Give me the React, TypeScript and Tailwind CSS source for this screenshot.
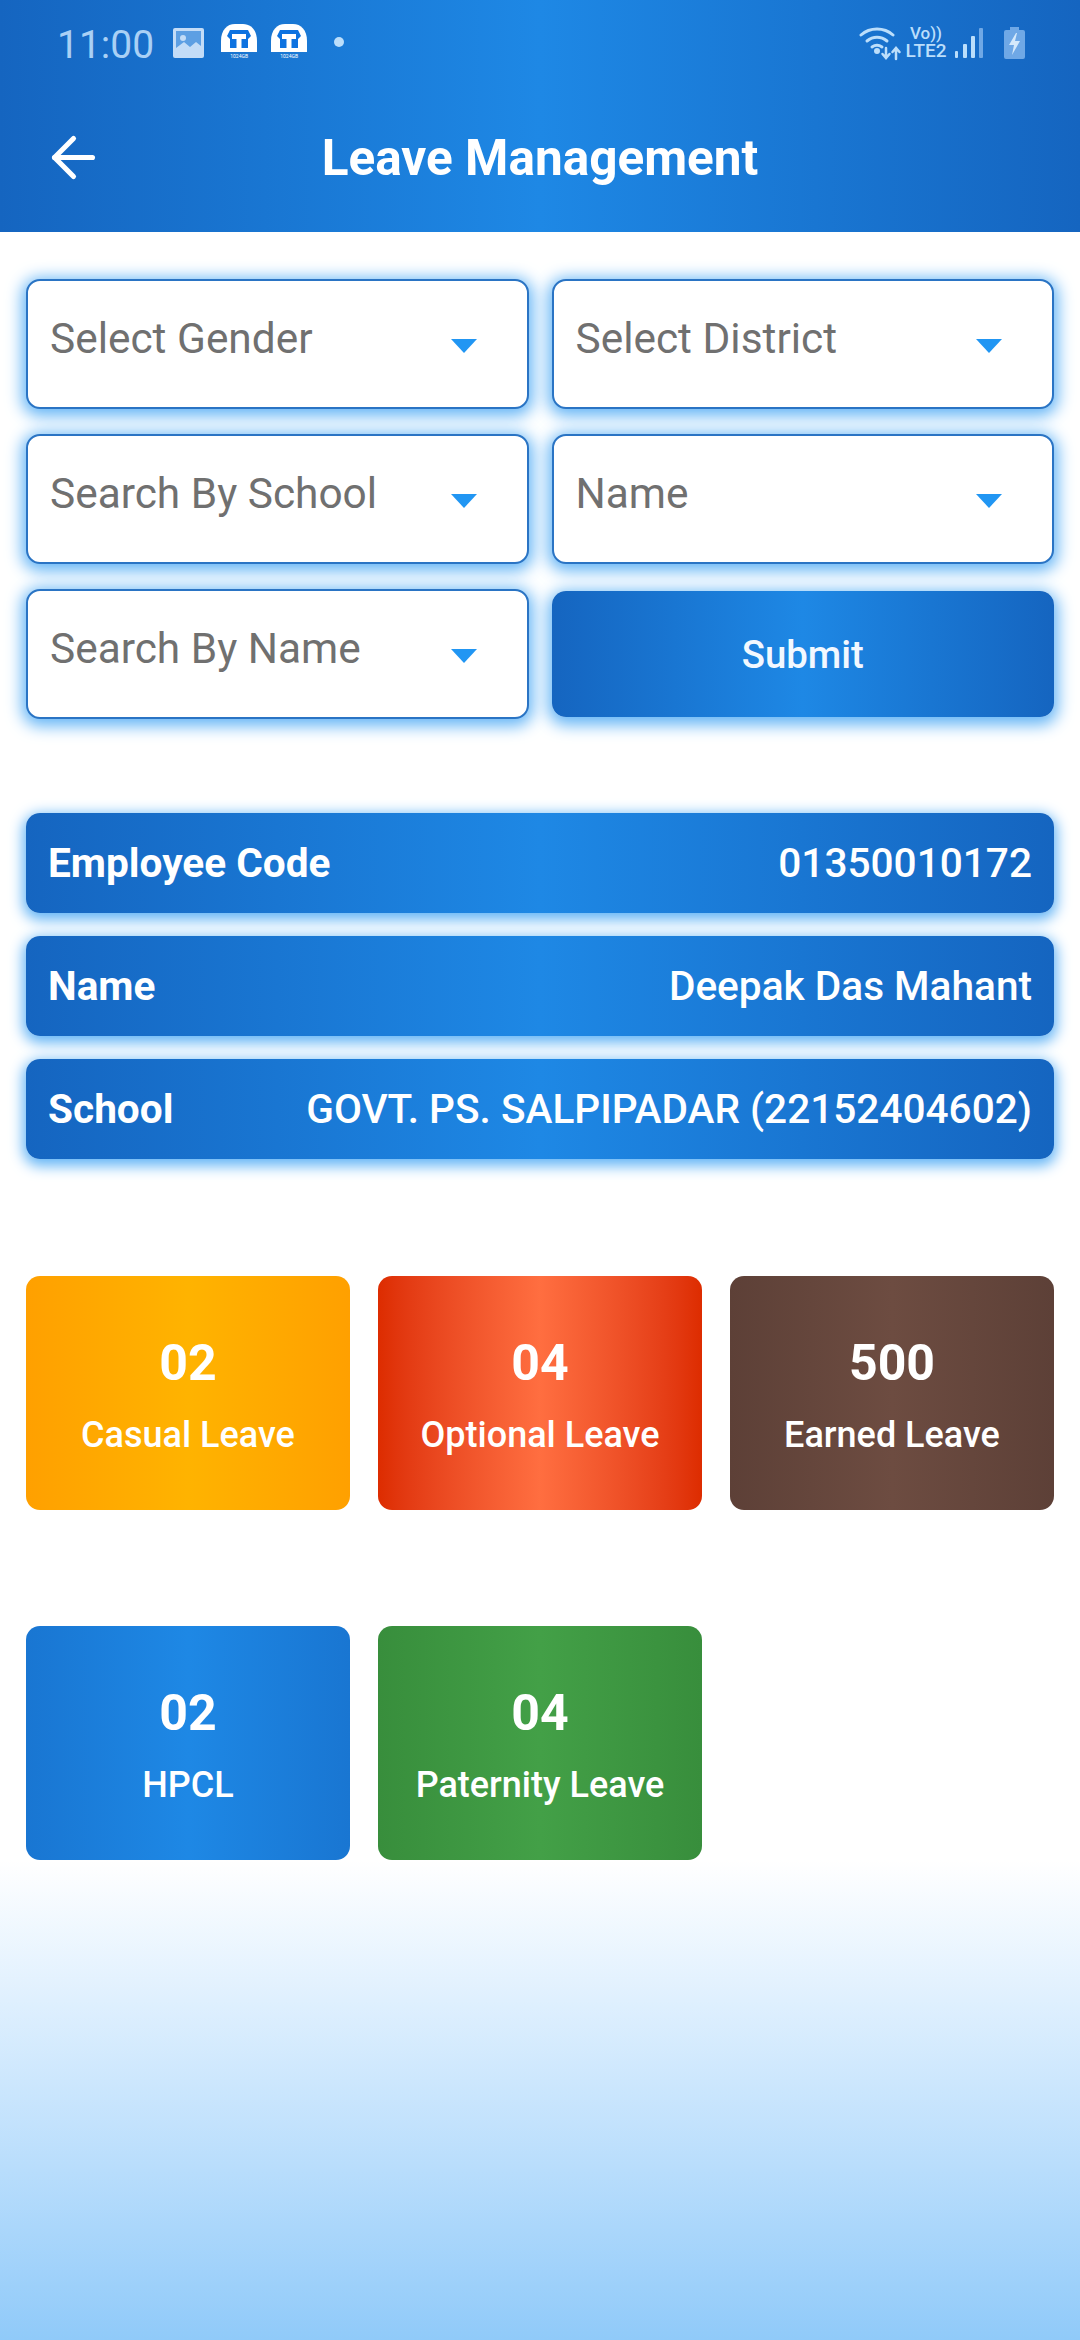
import React from 'react';
import { ArrowLeft } from 'lucide-react';

// ── Status bar icons ─────────────────────────────────────────────────────────
function PhotoIcon() {
  return (
    <svg width="31" height="30" viewBox="0 0 31 30" className="block">
      <rect x="0" y="0" width="31" height="30" rx="2" fill="#c3dcf7" />
      <rect x="3" y="3" width="25" height="24" fill="#5d9fe3" />
      <circle cx="10" cy="10" r="3" fill="#c3dcf7" />
      <path d="M3 27v-7l8-6 6 5 6-5 5 4v9z" fill="#c3dcf7" />
    </svg>
  );
}

function StorageIcon() {
  return (
    <div className="flex flex-col items-center w-[36px]">
      <svg width="36" height="28" viewBox="0 0 36 28" className="block">
        <path d="M0 28V17C0 6 6 0 14 0h8c8 0 14 6 14 17v11z" fill="#ffffff" />
        <path d="M9 6h18l3 6-3 3v9H9v-9l-3-3z" fill="#0d72e0" />
        <path d="M11 10h14v5h-4.500v9h-5v-9H11z" fill="#ffffff" />
      </svg>
      <span className="text-[5px] leading-[8px] text-white">1024GB</span>
    </div>
  );
}

function WifiIcon() {
  return (
    <svg width="42" height="34" viewBox="0 0 42 34" fill="none" stroke="#bbdefb" strokeWidth="3" strokeLinecap="round" className="block">
      <path d="M2 8C11 0 25 0 34 8" />
      <path d="M8 14c6-5 14-5 20 0" />
      <path d="M13 20c3-2 7-2 10 0" />
      <circle cx="18" cy="24" r="1.500" fill="#bbdefb" />
      <path d="M27 21v9M23.500 27l3.500 4 3.500-4" strokeWidth="2.500" />
      <path d="M37 32v-10M33.500 25l3.500-4 3.500 4" strokeWidth="2.500" />
    </svg>
  );
}

function SignalIcon() {
  return (
    <svg width="28" height="30" viewBox="0 0 28 30" className="block">
      <rect x="0" y="23" width="3" height="7" rx="1" fill="#bbdefb" />
      <rect x="8" y="16" width="4" height="14" rx="1" fill="#bbdefb" />
      <rect x="16" y="8" width="4" height="22" rx="1" fill="#bbdefb" />
      <rect x="24" y="0" width="4" height="30" rx="1" fill="#6fa8e6" />
    </svg>
  );
}

function BatteryIcon() {
  return (
    <svg width="21" height="32" viewBox="0 0 21 32" className="block">
      <path d="M6 0h9v3h4a2 2 0 012 2v25a2 2 0 01-2 2H2a2 2 0 01-2-2V5a2 2 0 012-2h4z" fill="#6fa8e6" />
      <path d="M12 6L5 18h5l-2 10 8-14h-5l2-8z" fill="#d5e9fb" />
    </svg>
  );
}

function StatusBar() {
  return (
    <div className="flex items-start h-[84px] pl-[57px] pr-[55px] pt-[23px]">
      <span className="text-[39px] leading-[44px] text-[#a9d0f5]">11:00</span>
      <div className="ml-[19px] mt-[5px]"><PhotoIcon /></div>
      <div className="ml-[17px] mt-[1px] flex gap-[14px]">
        <StorageIcon />
        <StorageIcon />
      </div>
      <div className="ml-[27px] mt-[14px] w-[10px] h-[10px] rounded-full bg-[#bbdefb]" />
      <div className="ml-auto flex items-start">
        <div className="mt-[4px]"><WifiIcon /></div>
        <div className="ml-[4px] mt-[1px] flex flex-col items-center w-[42px] text-[#bbdefb] font-medium">
          <span className="text-[17px] leading-[18px]">Vo))</span>
          <span className="text-[19px] leading-[18px]">LTE2</span>
        </div>
        <div className="ml-[8px] mt-[5px]"><SignalIcon /></div>
        <div className="ml-[21px] mt-[4px]"><BatteryIcon /></div>
      </div>
    </div>
  );
}

// ── Form controls ────────────────────────────────────────────────────────────
function SelectBox({ label }: { label: string }) {
  return (
    <div className="h-[130px] flex items-center justify-between pl-[22px] pr-[50px] pb-[10px] bg-white border-[2.5px] border-[#2a74c4] rounded-[14px] shadow-[0_3px_16px_4px_#64b5f6]">
      <span className="text-[42.4px] leading-[50px] text-[#707070]">{label}</span>
      <svg width="26" height="14" viewBox="0 0 26 14" className="block mt-[13px]">
        <path d="M0 0h26L13 14z" fill="#2196f3" />
      </svg>
    </div>
  );
}

function InfoRow({ label, value }: { label: string; value: string }) {
  return (
    <div className="h-[100px] flex items-center justify-between px-[22px] rounded-[14px] text-white text-[40.6px] bg-gradient-to-r from-[#1565c0] via-[#1e88e5] to-[#1565c0] shadow-[0_4px_14px_3px_#64b5f6]">
      <span className="font-bold">{label}</span>
      <span className="font-medium">{value}</span>
    </div>
  );
}

function LeaveCard({ count, label, className }: { count: string; label: string; className: string }) {
  return (
    <div className={`h-[234px] flex flex-col items-center justify-center pt-[6px] rounded-[14px] text-white bg-gradient-to-r ${className}`}>
      <span className="text-[50px] leading-[56px] font-bold">{count}</span>
      <span className="mt-[22px] text-[36px] leading-[44px] font-medium">{label}</span>
    </div>
  );
}

export default function App() {
  return (
    <div className="w-[1080px] h-[2340px] flex flex-col bg-white font-['Roboto',sans-serif]">
      <header className="h-[232px] shrink-0 bg-gradient-to-r from-[#1565c0] via-[#1e88e5] to-[#1565c0]">
        <StatusBar />
        <div className="relative flex items-center justify-center h-[148px]">
          <ArrowLeft className="absolute left-[41px] top-[41px] w-[65px] h-[65px] text-white" strokeWidth={1.9} />
          <h1 className="text-[49.5px] leading-[56px] font-bold text-white">Leave Management</h1>
        </div>
      </header>

      <main className="px-[26px] pt-[47px] shrink-0">
        <div className="grid grid-cols-2 gap-x-[23px] gap-y-[25px]">
          <SelectBox label="Select Gender" />
          <SelectBox label="Select District" />
          <SelectBox label="Search By School" />
          <SelectBox label="Name" />
          <SelectBox label="Search By Name" />
          <button className="mt-[2px] h-[126px] pt-[2px] rounded-[14px] text-[38.4px] font-medium text-[#f2f8ff] bg-gradient-to-r from-[#1565c0] via-[#1e88e5] to-[#1565c0] shadow-[0_4px_16px_4px_#64b5f6]">
            Submit
          </button>
        </div>

        <div className="mt-[94px] flex flex-col gap-[23px]">
          <InfoRow label="Employee Code" value="01350010172" />
          <InfoRow label="Name" value="Deepak Das Mahant" />
          <InfoRow label="School" value="GOVT. PS. SALPIPADAR (22152404602)" />
        </div>

        <div className="mt-[117px] grid grid-cols-3 gap-x-[28px] gap-y-[116px]">
          <LeaveCard count="02" label="Casual Leave" className="from-[#ffa000] via-[#ffb300] to-[#ffa000]" />
          <LeaveCard count="04" label="Optional Leave" className="from-[#dd2c00] via-[#ff6e40] to-[#dd2c00]" />
          <LeaveCard count="500" label="Earned Leave" className="from-[#5d4037] via-[#6d4c41] to-[#5d4037]" />
          <LeaveCard count="02" label="HPCL" className="from-[#1976d2] via-[#1e88e5] to-[#1976d2]" />
          <LeaveCard count="04" label="Paternity Leave" className="from-[#388e3c] via-[#43a047] to-[#388e3c]" />
        </div>
      </main>

      <div className="flex-1 bg-gradient-to-b from-white to-[#90caf9]" />
    </div>
  );
}
